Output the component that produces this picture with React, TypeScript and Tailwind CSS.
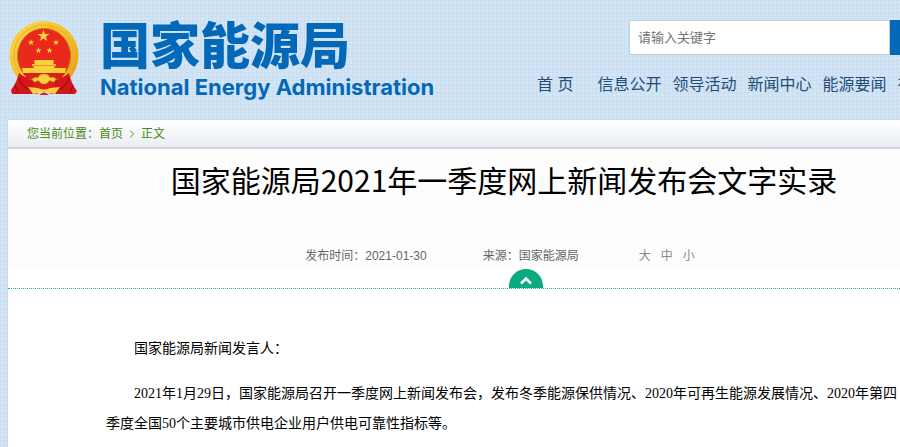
import { ChevronRight, Search } from "lucide-react";

const navItems = ["信息公开", "领导活动", "新闻中心", "能源要闻", "在"];

const fontSizes = ["大", "中", "小"];

const STAR = "M0 -1 L.235 -.324 L.951 -.309 L.38 .124 L.588 .809 L0 .4 L-.588 .809 L-.38 .124 L-.951 -.309 L-.235 -.324 Z";

function Emblem() {
  return (
    <svg viewBox="0 0 70 76" className="h-[76px] w-[70px] shrink-0" aria-hidden="true">
      <defs>
        <linearGradient id="gold" x1="0" y1="0" x2="1" y2="1">
          <stop offset="0" stopColor="#fbd648" />
          <stop offset="0.5" stopColor="#f5c02c" />
          <stop offset="1" stopColor="#e09a14" />
        </linearGradient>
      </defs>
      <ellipse cx="35" cy="35.5" rx="34.5" ry="34.5" fill="url(#gold)" />
      <ellipse cx="35" cy="35.5" rx="30" ry="30.5" fill="none" stroke="#eeb026" strokeWidth="1" />
      <ellipse cx="35" cy="36" rx="26.5" ry="27.5" fill="#e8291c" stroke="#c8701a" strokeWidth="1" />
      <g fill="#fcd03c">
        <path d={STAR} transform="translate(34.5 16) scale(6.3)" />
        <path d={STAR} transform="translate(22 22.5) scale(3.3)" />
        <path d={STAR} transform="translate(47 22.5) scale(3.3)" />
        <path d={STAR} transform="translate(29.5 30.5) scale(3.3)" />
        <path d={STAR} transform="translate(40.5 30.5) scale(3.3)" />
        <path d="M26 40h18l1.5 2h-1v2h2l1 2h-2v3h-21v-3h-2l1-2h2v-2h-1z" />
        <path d="M13 48h44l-1 5H14z" />
      </g>
      <path d="M24 45.5h22" stroke="#d98c1a" strokeWidth="0.8" />
      <path d="M14 53h42l-4 6H18z" fill="#dc2118" />
      <path d="M10 53q8 7 18 8l-2 5 3 8H3l-1-4q6-8 8-17z" fill="#d3161a" />
      <path d="M60 53q-8 7-18 8l2 5-3 8h25l2-3q-6-8-8-18z" fill="#d3161a" />
      <path d="M10 58q2 8 11 12M60 58q-2 8-11 12M6 65l3 8M64 65l-3 8" fill="none" stroke="#9f1014" strokeWidth="1.2" />
      <path d="M27 60q8 8 16 0l4 8q-12 7-24 0z" fill="#dc2118" />
      <path
        d="M23 59q4-3 6-1 1-4 6-4t6 4q3-2 6 1l-2 3q-3 0-4-2-3 4-6 4t-6-4q-1 2-4 2z"
        fill="#fcd03c"
        stroke="#e09a14"
        strokeWidth="0.7"
      />
      <path d="M19 67l10 1q6 3 12 0l10-1-5 7-6-1q-5-3-10 0l-6 1z" fill="#fcd03c" />
      <path d="M30 75q5-5 10 0z" fill="#dc2118" />
    </svg>
  );
}

function Header() {
  return (
    <header className="flex h-[120px] items-start">
      <a href="#" className="ml-[9px] flex shrink-0 pt-5">
        <Emblem />
        <span className="ml-[21px] flex flex-col text-[#0468b8]">
          <span className="text-[50px] leading-[55px] font-black">国家能源局</span>
          <span className="font-['Inter','Liberation_Sans',sans-serif] text-[22px] leading-[24px] font-bold">
            National Energy Administration
          </span>
        </span>
      </a>

      <div className="ml-auto w-[463px] shrink-0 pt-5">
        <form className="ml-[92px] flex h-[35px]" onSubmit={(e) => e.preventDefault()}>
          <input
            type="search"
            aria-label="请输入关键字"
            placeholder="请输入关键字"
            className="w-[261px] border border-[#c6ccd2] bg-white px-2 text-[13px] text-[#555] outline-none placeholder:text-[#757575]"
          />
          <button type="submit" aria-label="搜索" className="flex grow items-center justify-center bg-[#0468b8] text-white">
            <Search size={18} />
          </button>
        </form>
        <nav className="mt-[18px] flex text-[16px] leading-6 whitespace-nowrap text-[#1f4e79]">
          <a href="#" className="mr-6">首 页</a>
          {navItems.map((item) => (
            <a key={item} href="#" className="mr-[11px]">
              {item}
            </a>
          ))}
        </nav>
      </div>
    </header>
  );
}

export default function App() {
  return (
    <div className="min-h-screen overflow-x-hidden bg-[#d3e5f5] bg-[linear-gradient(#c3daf080_1px,transparent_1px),linear-gradient(90deg,#c3daf080_1px,transparent_1px)] bg-[size:4px_4px] font-['Liberation_Sans','Noto_Sans_CJK_SC',sans-serif]">
      <div className="flex min-h-screen min-w-[1000px] flex-col">
        <Header />

        <main className="ml-2 grow bg-white shadow-[0_0_2px_#b9c8d8]">
          <nav className="flex h-[29px] items-center border-b-2 border-[#d3d5db] bg-linear-to-b from-white to-[#e9edf3] pl-[19px] text-[12px] text-[#4c8a14]">
            <span>您当前位置：</span>
            <a href="#">首页</a>
            <ChevronRight size={12} strokeWidth={2} className="mx-[3px]" />
            <a href="#">正文</a>
          </nav>

          <div className="bg-[#fdfdfd]">
            <h1 className="pt-2 text-center font-['Noto_Sans_CJK_SC',sans-serif] text-[30px] leading-[44px] text-black">
              国家能源局2021年一季度网上新闻发布会文字实录
            </h1>
            <div className="flex justify-center pt-[46px] pb-1 text-[12px] leading-[18px] text-[#666]">
              <span>发布时间：2021-01-30</span>
              <span className="ml-14">来源：国家能源局</span>
              <span className="mr-2 ml-[60px] flex gap-[10px] text-[#888]">
                {fontSizes.map((s) => (
                  <button key={s} type="button">
                    {s}
                  </button>
                ))}
              </span>
            </div>
          </div>

          <div className="flex justify-center border-b border-dotted border-b-[#12b48c] pl-[44px]">
            <button
              type="button"
              aria-label="收起"
              className="flex h-[19px] w-[34px] items-center justify-center rounded-t-full bg-[#0aab82] text-white"
            >
              <svg viewBox="0 0 12 9" className="mt-1 h-[9px] w-3" fill="none" stroke="currentColor" strokeWidth="2.6">
                <path d="M1 7.5 6 2.5l5 5" />
              </svg>
            </button>
          </div>

          <article className="px-[98px] pt-[45px] font-['Liberation_Serif','Noto_Sans_CJK_SC',serif] text-[14px] leading-[30px] text-black">
            <p className="mb-[15px] indent-[2em]">国家能源局新闻发言人：</p>
            <p className="indent-[2em]">
              2021年1月29日，国家能源局召开一季度网上新闻发布会，发布冬季能源保供情况、2020年可再生能源发展情况、2020年第四季度全国50个主要城市供电企业用户供电可靠性指标等。
            </p>
          </article>
        </main>
      </div>
    </div>
  );
}
